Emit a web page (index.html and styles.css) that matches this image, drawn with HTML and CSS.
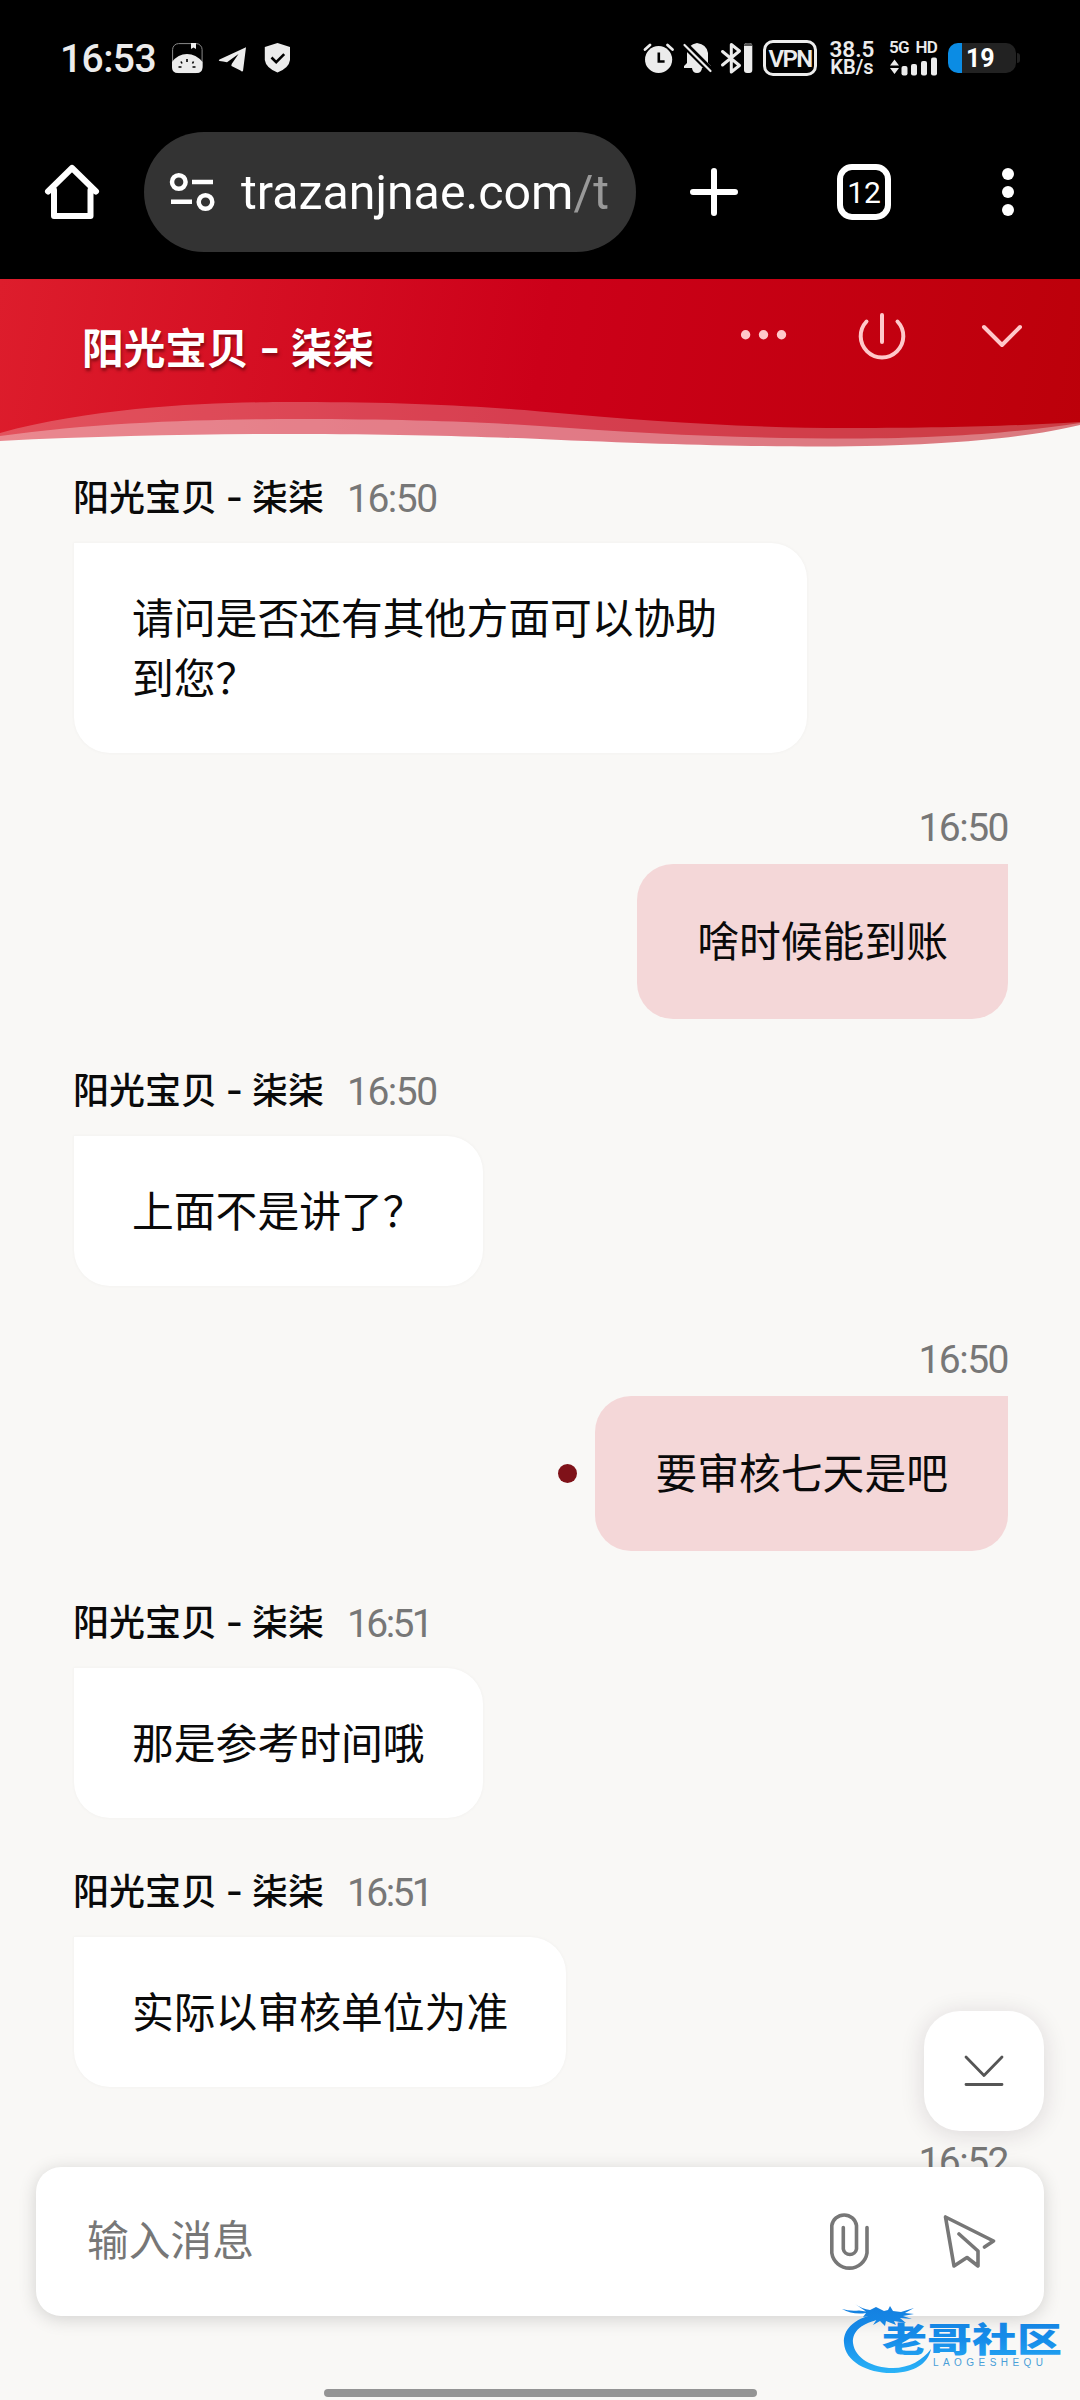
FILE: index.html
```html
<!DOCTYPE html>
<html lang="zh-CN">
<head>
<meta charset="utf-8">
<title>阳光宝贝 - 柒柒</title>
<link rel="stylesheet" href="styles.css">
</head>
<body>
<div class="screen">
  <div class="status">
    <span class="clock">16:53</span>
    <svg class="notif" width="120" height="34" viewBox="172 41 120 34" fill="#ececec">
      <rect x="172.6" y="43.6" width="29.500" height="29" rx="6" fill="none" stroke="#8a8a8a" stroke-width="1"/>
      <path d="M172 62Q178 54 187 54T202.500 62V67Q202.500 73 196.500 73H178Q172 73 172 67Z"/>
      <path d="M191 43h5v6l-2.500-1.500L191 49Z"/>
      <path d="M187 59v3M181 61.500l1 2M193.500 61.500l-1 2M178.500 67h3M192.500 67h3" stroke="#000" stroke-width="1.600" fill="none"/>
      <path d="M219.500 59.500L246 47.200L243 71Q242 72 240.500 70.500L231.500 66Q231 65 232 63.500L238.500 54L227 62.200Q223 61.500 219.500 61Q218 60 219.500 59.500Z"/>
      <path d="M277.500 43L290 47V60Q289 68 277.500 72.500Q266 68 264.800 60V47Z"/>
      <path d="M271.500 57.500l4.700 4.700 8-8" fill="none" stroke="#000" stroke-width="2.600"/>
    </svg>
    <svg class="indicators" width="110" height="34" viewBox="643 41 110 34" fill="#ececec">
      <circle cx="658.600" cy="59.500" r="13.600"/>
      <path d="M658.800 52.500v9h5.800" fill="none" stroke="#000" stroke-width="2.600"/>
      <path d="M645 49.500l5-4.500M667.500 45l5 4.500" stroke="#ececec" stroke-width="2.800" stroke-linecap="round"/>
      <path d="M684 68V66L687 63V53Q688 44.500 697 43Q707 44.500 708 53V63L711 66V68H702Q701.500 73 697 73T692 68Z"/>
      <path d="M682 42l29 29" stroke="#000" stroke-width="7"/>
      <path d="M684.500 45l26 26" stroke="#ececec" stroke-width="2.200" stroke-linecap="round"/>
      <path d="M722.500 51.500l17 14-8.200 6.500V44.500l8.200 6.500-17 14" fill="none" stroke="#ececec" stroke-width="3" stroke-linejoin="round" stroke-linecap="round"/>
      <rect x="744" y="43" width="8.300" height="30" rx="3"/>
      <path d="M744 46q0-3 3-3h2.300q3 0 3 3Z" fill="#555"/>
    </svg>
    <span class="vpn">VPN</span>
    <span class="speed"><span>38.5</span><span class="unit">KB/s</span></span>
    <span class="signal">
      <span class="net"><span>5G</span><span>HD</span></span>
      <svg width="48" height="19" viewBox="889 57 48 19" fill="#ececec">
        <path d="M890 65.500l4.500-6 4.500 6ZM890 68l4.500 6 4.500-6Z"/>
        <rect x="901.500" y="66" width="6" height="9.500" rx="2"/><rect x="911" y="64" width="6" height="11.500" rx="2"/><rect x="921" y="61" width="6" height="14.500" rx="2"/><rect x="931" y="57.500" width="6" height="18" rx="2"/>
      </svg>
    </span>
    <span class="battery">19</span>
  </div>

  <div class="browser">
    <svg class="home" width="56" height="58" viewBox="44 163 56 58" fill="none" stroke="#fff" stroke-width="6" stroke-linejoin="round" stroke-linecap="round"><path d="M48 191.500L72 168l24 23.500M54 190v26H90.500V190"/></svg>
    <div class="address">
      <svg width="46" height="42" viewBox="169 171 46 42" fill="none" stroke="#fff" stroke-width="4.500"><circle cx="178.800" cy="182" r="6.800"/><circle cx="205.500" cy="202" r="6.800"/><path d="M192 182h21M171 201.800h21"/></svg>
      <span class="url">trazanjnae.com<span class="path">/t</span></span>
    </div>
    <svg class="plus" width="50" height="50" viewBox="0 0 50 50" stroke="#fff" stroke-width="6" stroke-linecap="round"><path d="M25 4v42M4 25h42"/></svg>
    <div class="tabs">12</div>
    <svg class="more" width="12" height="50" viewBox="0 0 12 50" fill="#fff"><circle cx="6" cy="7" r="6"/><circle cx="6" cy="25" r="6"/><circle cx="6" cy="43" r="6"/></svg>
  </div>

  <header class="head">
    <h1>阳光宝贝<i>-</i>柒柒</h1>
    <svg class="tools" width="286" height="60" viewBox="738 304 286 60" fill="none" stroke="#ffc8ca" stroke-width="4" stroke-linecap="round" stroke-linejoin="round">
      <g fill="#ffc8ca" stroke="none"><circle cx="745.600" cy="334.700" r="4.700"/><circle cx="763.500" cy="334.700" r="4.700"/><circle cx="781.500" cy="334.700" r="4.700"/></g>
      <path d="M866.500 321.500A21.300 21.300 0 1 0 897.500 321.500M882 315v27"/>
      <path d="M984 327l18 18 18-18"/>
    </svg>
    <svg class="wave" width="1080" height="50" viewBox="0 398 1080 50">
      <path fill="#f8f7f5" fill-opacity=".25" d="M0 432C110 402 240 401 300 401C400 401 480 405 540 410.500C650 420 740 427 850 427C950 427 1010 425 1080 421V448H0Z"/>
      <path fill="#f8f7f5" fill-opacity=".33" d="M0 435C100 421 210 418 300 418C400 418 480 421 540 425C650 433 740 437.500 850 437.500C950 437.500 1020 431 1080 422V448H0Z"/>
      <path fill="#f9f8f6" d="M0 440C100 435 200 433 290 433C400 433 470 435.500 540 438C650 443 740 445.500 820 445.500C950 445.500 1030 436 1080 424V448H0Z"/>
    </svg>
  </header>

  <main class="chat">
    <div class="msg in"><div class="meta"><b>阳光宝贝<i>-</i>柒柒</b><time>16:50</time></div><p class="bubble">请问是否还有其他方面可以协助到您？</p></div>
    <div class="msg out"><div class="meta"><time>16:50</time></div><p class="bubble">啥时候能到账</p></div>
    <div class="msg in"><div class="meta"><b>阳光宝贝<i>-</i>柒柒</b><time>16:50</time></div><p class="bubble">上面不是讲了？</p></div>
    <div class="msg out"><div class="meta"><time>16:50</time></div><div class="line"><span class="dot"></span><p class="bubble">要审核七天是吧</p></div></div>
    <div class="msg in"><div class="meta"><b>阳光宝贝<i>-</i>柒柒</b><time class="narrow">16:51</time></div><p class="bubble">那是参考时间哦</p></div>
    <div class="msg in"><div class="meta"><b>阳光宝贝<i>-</i>柒柒</b><time class="narrow">16:51</time></div><p class="bubble">实际以审核单位为准</p></div>
    <div class="msg out"><div class="meta"><time>16:52</time></div></div>
  </main>

  <button class="to-bottom"><svg width="44" height="36" viewBox="0 0 44 36" fill="none" stroke="#555" stroke-width="2.800" stroke-linecap="round" stroke-linejoin="round"><path d="M4 4l18 18.500L40 4M4 31.500h36"/></svg></button>

  <footer class="foot">
    <div class="composer">
      <span class="placeholder">输入消息</span>
      <svg width="40" height="62" viewBox="829 2210 40 62" fill="none" stroke="#777" stroke-width="3.600" stroke-linecap="round"><path d="M867 2226.500V2252A17.800 17.800 0 0 1 831.800 2252V2224.500A12.500 12.500 0 0 1 856.500 2224.500V2248A6.700 6.700 0 0 1 843.300 2248V2226.500"/></svg>
      <svg class="send" width="54" height="54" viewBox="943 2215 54 54" fill="none" stroke="#777" stroke-width="3.600" stroke-linecap="round" stroke-linejoin="round"><path d="M984.500 2247L993.500 2241L945.500 2217L954 2266L967 2257.500L978 2266V2251L959 2234"/></svg>
    </div>
    <div class="pill"></div>
  </footer>

  <svg class="watermark" width="245" height="95" viewBox="0 0 245 95">
    <defs><linearGradient id="wm" x1="0" y1="15" x2="0" y2="84" gradientUnits="userSpaceOnUse"><stop offset="0" stop-color="#1480e0"/><stop offset=".5" stop-color="#168ce9"/><stop offset="1" stop-color="#2cb5f8"/></linearGradient></defs>
    <g fill="url(#wm)">
      <path d="M40 24C18 29 8 40 9 53C10 72 34 84 59 83C79 82 93 74 96 59C88 70 74 78 58 78C37 78 20 68 18 53C17 41 27 33 46 29Z"/>
      <path d="M7 19Q15 21.500 24 20.500L31 21.500L20 14Q27 19 35 20L41 17L49 21L53 20L55 16L58 21L66 22L79 18L70 23L79 24L68 26L77 29L65 28L71 33L59 31L61 35L51 31L50 36L45 31L38 35L42 29L33 31L36 26L28 27L31 23Q18 25 7 19Z"/>
      <text class="wm-name" x="47" y="62" textLength="180" lengthAdjust="spacingAndGlyphs">老哥社区</text>
      <text class="wm-latin" x="98" y="76" textLength="110">LAOGESHEQU</text>
    </g>
  </svg>
</div>
</body>
</html>
```
FILE: styles.css
```css
* { box-sizing: border-box; }
body { margin: 0; font-family: Roboto, "Noto Sans CJK SC", sans-serif; }
i { font-style: normal; }
svg { display: block; flex: none; }
.screen { position: relative; width: 1080px; height: 2400px; overflow: hidden; background: #f9f8f6; display: flex; flex-direction: column; }

.status { height: 116px; background: #000; color: #ececec; display: flex; align-items: center; padding-left: 60px; flex: none; }
.clock { font-size: 39px; font-weight: 500; width: 112px; letter-spacing: -.6px; line-height: 60px; padding-top: 2px; }
.indicators { margin-left: 351px; }
.vpn { width: 54px; height: 36px; margin-left: 10px; border: 3px solid #ececec; border-radius: 10px; font-size: 24px; font-weight: 600; line-height: 32px; text-align: center; letter-spacing: -1.6px; }
.speed { display: flex; flex-direction: column; align-items: center; width: 46px; margin-left: 12px; margin-right: 1px; font-size: 22.500px; font-weight: 600; line-height: 18px; white-space: nowrap; }
.speed .unit { font-size: 20px; }
.signal { width: 48px; margin-left: 13px; height: 36px; display: flex; flex-direction: column; justify-content: space-between; }
.net { display: flex; justify-content: space-between; font-size: 17px; font-weight: 600; line-height: 15px; letter-spacing: -.8px; }
.battery { position: relative; width: 68px; height: 30px; margin-left: 11px; border-radius: 10px; background: linear-gradient(90deg, #0b8ce4 14px, #222 14px); color: #fff; font-weight: 700; font-size: 25px; line-height: 31px; padding-left: 18px; }
.battery::after { content: ""; position: absolute; left: 69px; top: 10px; width: 3px; height: 10px; border-radius: 0 3px 3px 0; background: #222; }

.browser { height: 163px; flex: none; background: #000; padding: 0 66px 11px 44px; display: flex; align-items: center; }
.address { flex: none; margin: 0 4px 0 44px; width: 492px; height: 120px; border-radius: 60px; background: #333; display: flex; align-items: center; padding-left: 25px; }
.url { margin-left: 26px; width: 372px; font-size: 48.3px; line-height: 64px; color: #fff; white-space: nowrap; padding-top: 2px; }
.path { color: #999; }
.plus { margin-left: 49px; }
.tabs { margin-left: 98px; width: 54px; height: 56px; border: 6px solid #fff; border-radius: 15px; color: #fff; font-size: 30px; line-height: 45px; text-align: center; }
.more { margin-left: 111px; }

.head { position: relative; height: 169px; flex: none; background: linear-gradient(100deg, #dd1d2c 0%, #cc0019 50%, #bc000a 100%); display: flex; align-items: flex-start; justify-content: space-between; padding: 25px 56px 0 82px; }
h1 { margin: 15px 0 0; font-size: 41.700px; font-weight: 700; line-height: 62px; color: #fff; text-shadow: 1px 3px 3px rgba(60,0,0,.5); }
h1 i { display: inline-block; width: 42px; text-align: center; transform: scaleX(1.3); }
.wave { position: absolute; left: 0; bottom: -1px; }

.chat { flex: 1; padding: 26px 72px 0 74px; overflow: hidden; display: flex; flex-direction: column; gap: 48px; }
.msg { display: flex; flex-direction: column; }
.in { align-items: flex-start; }
.out { align-items: flex-end; }
.meta { height: 48px; padding-top: 3px; display: flex; align-items: center; gap: 23px; font-size: 36px; line-height: 45px; }
.in + .out { margin-top: 1.500px; }
.in + .in { margin-top: 2px; }
.in .meta { margin-bottom: 21px; margin-left: -1px; }
.out .meta { margin-bottom: 13px; }
.meta b { font-weight: 500; color: #0a0a0a; }
.meta i { display: inline-block; width: 35px; text-align: center; transform: scaleX(1.3); }
.meta time { color: #777; font-size: 39px; letter-spacing: -1.500px; }
.meta .narrow { letter-spacing: -2.600px; }
.bubble { margin: 0; font-size: 41.800px; line-height: 60px; color: #0a0a0a; border-radius: 36px; }
.in .bubble { padding: 47px 58px 43px; max-width: 733px; background: #fff; border-top-left-radius: 0; box-shadow: 0 0 3px 1px rgba(0,0,0,.025); }
.out .bubble { padding: 49px 60px 46px; background: #f4d7d8; border-top-right-radius: 0; }
.line { display: flex; align-items: center; gap: 18px; }
.dot { width: 19px; height: 19px; border-radius: 50%; background: #7f1219; }

.to-bottom { position: absolute; left: 924px; top: 2011px; width: 120px; height: 120px; padding: 0; border: 0; border-radius: 36px; background: #fff; box-shadow: 0 3px 24px rgba(40,20,40,.14); display: flex; align-items: center; justify-content: center; }
.foot { position: relative; height: 233px; flex: none; padding: 0 36px; background: #f9f8f6; }
.composer { height: 149px; border-radius: 25px; background: #fff; box-shadow: 0 3px 18px rgba(0,0,0,.16); display: flex; align-items: center; padding: 0 47px 0 51px; }
.placeholder { flex: 1; font-size: 41.750px; line-height: 60px; color: #777; }
.send { margin-left: 74px; }
.pill { width: 433px; height: 8px; border-radius: 4px; margin: 73px auto 0; background: #949494; }
.watermark { position: absolute; left: 835px; top: 2290px; }
.wm-name { font: 900 34px "Noto Sans CJK SC", sans-serif; }
.wm-latin { font: 10px "Liberation Sans", sans-serif; fill: #4a9fd8; }
```
